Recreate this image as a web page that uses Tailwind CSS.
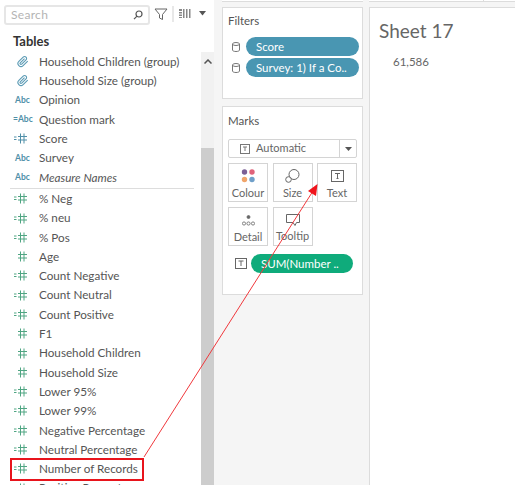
<!DOCTYPE html>
<html lang="en">
<head>
    <meta charset="UTF-8">
    <title>Sheet 17</title>
    <script src="https://cdn.jsdelivr.net/npm/@tailwindcss/browser@4"></script>
</head>
<body class="bg-white font-['Lato','Noto_Sans',sans-serif]">
    <div class="relative w-[515px] h-[485px] overflow-hidden flex bg-[#f5f5f5]">

        <!-- data pane -->
        <div class="w-[214px] h-full bg-white flex flex-col shrink-0">
            <div class="h-[28px] pl-[4px] pt-[5px] flex items-start">
                <div class="w-[146px] h-[20px] border-2 border-[#e6e6e6] rounded-[3px] flex items-center pl-[5px] pr-[5px] text-[12px] text-[#b4b4b4] tracking-[0.3px]">
                    <span class="flex-1">Search</span>
                    <svg width="10" height="10" viewBox="0 0 10 10" fill="none" stroke="#555" stroke-width="1.2"><circle cx="6" cy="4" r="3"/><path d="M4 6.2 L1 9.2"/></svg>
                </div>
                <svg class="ml-[4px] mt-[2px]" width="14" height="14" viewBox="0 0 14 14" fill="none" stroke="#666" stroke-width="1"><path d="M1 2 H13 L8.5 7.5 V12.5 L5.5 11 V7.5 Z"/></svg>
                <div class="ml-[4px] mt-[1px] w-[2px] h-[16px] bg-[#e8e8e8]"></div>
                <svg class="ml-[5px] mt-[4px]" width="12" height="9" viewBox="0 0 12 9" fill="#888"><path d="M0 0h3v2H0zM4 0h1.500v9H4zM7 0h1.500v9H7zM10 0h1.500v9H10zM0 3h3v1.500H0zM0 5.500h3V7H0zM0 8h3v1H0z"/></svg>
                <svg class="ml-[8px] mt-[6px]" width="7" height="5" viewBox="0 0 7 5" fill="#555"><path d="M0 0h7L3.500 4.500z"/></svg>
            </div>
            <div class="h-[24px] pl-[13px] pt-[3px] flex items-center text-[13px] font-bold text-[#333]">Tables</div>

            <div class="flex flex-1 min-h-0">
                <div id="fieldList" class="w-[201px] text-[11.7px] text-[#555] overflow-hidden">
                    <!-- dimensions -->
                    <div class="h-[19.3px] flex items-center"><span class="w-[39px] flex pl-[17px]"><svg width="12" height="13" viewBox="0 0 24 24" fill="none" stroke="#5b9bb5" stroke-width="2.2"><path d="m21.44 11.05-9.19 9.19a6 6 0 0 1-8.49-8.49l8.57-8.57A4 4 0 1 1 18 8.84l-8.59 8.57a2 2 0 0 1-2.83-2.83l8.49-8.48"/></svg></span><span>Household Children (group)</span></div>
                    <div class="h-[19.3px] flex items-center"><span class="w-[39px] flex pl-[17px]"><svg width="12" height="13" viewBox="0 0 24 24" fill="none" stroke="#5b9bb5" stroke-width="2.2"><path d="m21.44 11.05-9.19 9.19a6 6 0 0 1-8.49-8.49l8.57-8.57A4 4 0 1 1 18 8.84l-8.59 8.57a2 2 0 0 1-2.83-2.83l8.49-8.48"/></svg></span><span>Household Size (group)</span></div>
                    <div class="h-[19.3px] flex items-center"><span class="w-[39px] pl-[15px] text-[8.500px] font-bold text-[#4f8fa8]">Abc</span><span>Opinion</span></div>
                    <div class="h-[19.3px] flex items-center"><span class="w-[39px] pl-[13px] text-[8.500px] font-bold text-[#4f8fa8] whitespace-nowrap">=Abc</span><span>Question mark</span></div>
                    <div class="h-[19.3px] flex items-center"><span class="w-[39px] flex justify-end pr-[11px]"><svg width="14" height="11" viewBox="0 0 14 11" fill="none" stroke="#4f8fa8" stroke-width="1"><path d="M0 4h2.500M0 6.500h2.500M6.500 0.500v10M10 0.500v10M4 3.500h9M4 7h9"/></svg></span><span>Score</span></div>
                    <div class="h-[19.3px] flex items-center"><span class="w-[39px] pl-[15px] text-[8.500px] font-bold text-[#4f8fa8]">Abc</span><span>Survey</span></div>
                    <div class="h-[19.3px] flex items-center"><span class="w-[39px] pl-[15px] text-[8.500px] font-bold text-[#4f8fa8]">Abc</span><span class="italic">Measure Names</span></div>
                    <div class="h-[2px] ml-[10px] mr-[7px] border-b border-[#ddd]"></div>
                </div>
                <div class="w-[13px] bg-[#f1f1f1] flex flex-col">
                    <div class="h-[96px] flex justify-center pt-[7px]"><svg width="8" height="5" viewBox="0 0 8 5" fill="none" stroke="#555" stroke-width="1.500"><path d="M0.500 4.500L4 1l3.500 3.500"/></svg></div>
                    <div class="flex-1 bg-[#cdcdcd]"></div>
                </div>
            </div>
        </div>

        <div class="w-[8px] shrink-0"></div>

        <!-- filters and marks -->
        <div class="w-[141px] shrink-0 flex flex-col pt-[7px] gap-[7px] text-[#555]">
            <div class="h-[92px] bg-white border border-[#dcdcdc] pl-[5px] pr-[3px]">
                <div class="text-[11.500px] pt-[4px] h-[28px]">Filters</div>
                <div class="flex items-center h-[21px] gap-[6px] pl-[4px]">
                    <svg width="8" height="10" viewBox="0 0 8 10" fill="none" stroke="#777"><ellipse cx="4" cy="2" rx="3.500" ry="1.500"/><path d="M0.500 2v6c0 2 7 2 7 0V2"/></svg>
                    <div class="flex-1 h-[19px] rounded-full bg-[#4996b2] text-white text-[11.500px] pl-[10px] leading-[19px] whitespace-nowrap">Score</div>
                </div>
                <div class="flex items-center h-[21px] gap-[6px] pl-[4px]">
                    <svg width="8" height="10" viewBox="0 0 8 10" fill="none" stroke="#777"><ellipse cx="4" cy="2" rx="3.500" ry="1.500"/><path d="M0.500 2v6c0 2 7 2 7 0V2"/></svg>
                    <div class="flex-1 h-[19px] rounded-full bg-[#4996b2] text-white text-[11.500px] pl-[10px] leading-[19px] whitespace-nowrap">Survey: 1) If a Co..</div>
                </div>
            </div>

            <div class="h-[189px] bg-white border border-[#dcdcdc] px-[5px]">
                <div class="text-[11.500px] pt-[5px] h-[32px]">Marks</div>
                <div class="h-[19px] border border-[#d4d4d4] rounded-[2px] flex items-center text-[11px] text-[#666]">
                    <svg class="ml-[11px] mr-[6px]" width="10" height="10" viewBox="0 0 10 10" fill="none" stroke="#777"><rect x="0.500" y="0.500" width="9" height="9"/><path d="M3 3h4M5 3v4"/></svg>
                    <span class="flex-1">Automatic</span>
                    <div class="w-[17px] h-full border-l border-[#d4d4d4] flex items-center justify-center"><svg width="7" height="4" viewBox="0 0 7 4" fill="#555"><path d="M0 0h7L3.500 4z"/></svg></div>
                </div>
                <div class="grid grid-cols-[40px_40px_40px] gap-x-[4.5px] gap-y-[5px] mt-[5px] text-[11px] text-[#666] text-center">
                    <div class="h-[39px] border border-[#d4d4d4] flex flex-col items-center pt-[5px]">
                        <svg width="15" height="14" viewBox="0 0 15 14"><circle cx="3.500" cy="3" r="2.700" fill="#7b5f95"/><circle cx="11" cy="3" r="2.700" fill="#e0637a"/><circle cx="3.500" cy="10.500" r="2.700" fill="#f0a56b"/><circle cx="11" cy="10.500" r="2.700" fill="#6f9fc9"/></svg>
                        <span class="mt-[2px] leading-[15px]">Colour</span>
                    </div>
                    <div class="h-[39px] border border-[#d4d4d4] flex flex-col items-center pt-[5px]">
                        <svg width="15" height="14" viewBox="0 0 15 14" fill="none" stroke="#666"><circle cx="9" cy="5.500" r="5"/><circle cx="3.500" cy="10.500" r="2.800" fill="#fff"/></svg>
                        <span class="mt-[2px] leading-[15px]">Size</span>
                    </div>
                    <div class="h-[39px] border border-[#d4d4d4] flex flex-col items-center pt-[6px]">
                        <svg width="13" height="12" viewBox="0 0 13 12" fill="none" stroke="#666"><rect x="0.500" y="0.500" width="12" height="11"/><path d="M4 3.500h5M6.500 3.500v5M5.500 8.500h2"/></svg>
                        <span class="mt-[3px] leading-[15px]">Text</span>
                    </div>
                    <div class="h-[39px] border border-[#d4d4d4] flex flex-col items-center pt-[7px]">
                        <svg width="13" height="11" viewBox="0 0 13 11" fill="none" stroke="#666" stroke-width="0.800"><circle cx="6.500" cy="2" r="1.500" fill="#666"/><circle cx="2" cy="8.500" r="1.600"/><circle cx="6.500" cy="8.500" r="1.600"/><circle cx="11" cy="8.500" r="1.600"/></svg>
                        <span class="mt-[3px] leading-[15px]">Detail</span>
                    </div>
                    <div class="h-[39px] border border-[#d4d4d4] flex flex-col items-center pt-[6px]">
                        <svg width="14" height="12" viewBox="0 0 14 12" fill="none" stroke="#666"><path d="M0.500 0.500h13v8h-3l-1.500 3-2-3h-6.500z"/></svg>
                        <span class="mt-[2px] leading-[15px]">Tooltip</span>
                    </div>
                </div>
                <div class="flex items-center mt-[8px] h-[19px]">
                    <svg class="ml-[7px]" width="12" height="11" viewBox="0 0 12 11" fill="none" stroke="#666"><rect x="0.500" y="0.500" width="11" height="10"/><path d="M3.500 3h5M6 3v5"/></svg>
                    <div class="ml-[4px] w-[102px] h-[19px] rounded-full bg-[#0fab7b] text-white text-[11.500px] pl-[10px] leading-[19px] whitespace-nowrap">SUM(Number ..</div>
                </div>
            </div>
        </div>

        <div class="w-[6px] shrink-0"></div>

        <!-- worksheet -->
        <div class="flex-1 mt-[7px] bg-white border-l border-t border-[#dcdcdc] pl-[9px] text-[#666]">
            <div class="text-[19px] pt-[10px] leading-[26px]">Sheet 17</div>
            <div class="text-[11.500px] pl-[14px] pt-[9px]">61,586</div>
        </div>

        <!-- top edge of the shelves above -->
        <div class="absolute left-[222px] top-0 w-[141px] h-[2px] bg-white border-b border-[#dcdcdc]"></div>
        <div class="absolute left-[369px] top-0 w-[115px] h-[2px] bg-white border-b border-r border-[#dcdcdc]"></div>
        <div class="absolute left-[484px] top-0 w-[31px] h-[2px] bg-white border-b border-[#dcdcdc]"></div>

        <!-- annotation -->
        <div class="absolute left-[10px] top-[458px] w-[134px] h-[23px] border-2 border-[#e8141c]"></div>
        <svg class="absolute left-0 top-0" width="515" height="485" viewBox="0 0 515 485" fill="none">
            <path d="M144 457 L313 191" stroke="#f0383c" stroke-width="1"/>
            <path d="M317.500 184 L308 191 L316 196 Z" fill="#f0141c"/>
        </svg>
    </div>

    <script>
        // measures below the separator, true = calculated field (has the small = prefix)
        const measures = [
            ['% Neg', true], ['% neu', true], ['% Pos', true], ['Age', false],
            ['Count Negative', true], ['Count Neutral', true], ['Count Positive', true],
            ['F1', false], ['Household Children', false], ['Household Size', false],
            ['Lower 95%', true], ['Lower 99%', true], ['Negative Percentage', true],
            ['Neutral Percentage', true], ['Number of Records', true], ['Positive Percentage', true]
        ];
        const fieldList = document.getElementById('fieldList');
        measures.forEach(([name, calc]) => {
            const row = document.createElement('div');
            row.className = 'h-[19.3px] flex items-center';
            const prefix = calc ? 'M0 4h2.500M0 6.500h2.500' : '';
            row.innerHTML = `<span class="w-[39px] flex justify-end pr-[11px]"><svg width="14" height="11" viewBox="0 0 14 11" fill="none" stroke="#4fa582" stroke-width="1"><path d="${prefix}M6.500 0.500v10M10 0.500v10M4 3.500h9M4 7h9"/></svg></span><span></span>`;
            row.lastChild.textContent = name;
            fieldList.appendChild(row);
        });
    </script>
</body>
</html>
